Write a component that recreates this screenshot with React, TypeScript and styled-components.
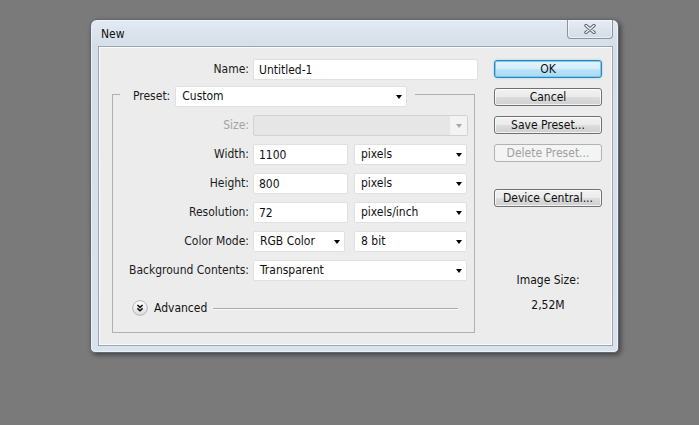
import styled, { createGlobalStyle } from "styled-components";

const GlobalStyle = createGlobalStyle`
    html, body {
        margin: 0;
        padding: 0;
        background: #7a7a7a;
    }
    body {
        font-family: "DejaVu Sans Condensed", "DejaVu Sans", Tahoma, sans-serif;
        font-stretch: condensed;
        font-size: 12px;
        line-height: 15px;
        color: #1b1b1b;
    }
`;

const Desktop = styled.div`
    width: 699px;
    height: 425px;
    box-sizing: border-box;
    padding: 19px 0 0 90px;
    overflow: hidden;
`;

const Window = styled.div`
    width: 529px;
    height: 334px;
    box-sizing: border-box;
    display: flex;
    flex-direction: column;
    padding: 0 5px 6px 7px;
    border: 1px solid #5f6872;
    border-radius: 7px 7px 5px 5px;
    background: linear-gradient(#e2e9f1, #d5dfe9 26px, #d9e3ed);
    box-shadow: inset 0 0 0 1px rgba(255, 255, 255, 0.55), 2px 2px 5px rgba(0, 0, 0, 0.45);
`;

const TitleBar = styled.div`
    height: 26px;
    display: flex;
    justify-content: space-between;
    align-items: flex-start;
`;

const Title = styled.div`
    padding: 7px 0 0 3px;
    color: #111;
`;

const CloseButton = styled.div`
    width: 46px;
    height: 19px;
    box-sizing: border-box;
    display: flex;
    justify-content: center;
    align-items: center;
    border: 1px solid #8a94a0;
    border-top: none;
    border-radius: 0 0 4px 4px;
    background: linear-gradient(#e6ecf2, #d4dce6);
    box-shadow: inset 0 0 0 1px rgba(255, 255, 255, 0.5);
`;

const DialogBody = styled.div`
    flex: 1;
    display: flex;
    padding: 12px 10px 0 13px;
    border: 1px solid #9ba6b2;
    background: #ececec;
    box-shadow: inset 1px 1px 0 #fbfbfb, inset -1px -1px 0 #fbfbfb;
`;

const FormColumn = styled.div`
    width: 366px;
    display: flex;
    flex-direction: column;
`;

const ButtonColumn = styled.div`
    width: 108px;
    margin-left: 16px;
    padding-top: 1px;
    display: flex;
    flex-direction: column;
    gap: 10px;
`;

const Row = styled.div`
    height: 21px;
    display: flex;
    align-items: center;
    gap: 4px;
`;

const Label = styled.div<{ $w: number; $disabled?: boolean }>`
    width: ${(p) => p.$w}px;
    flex: none;
    text-align: right;
    white-space: nowrap;
    color: ${(p) => (p.$disabled ? "#a3a3a3" : "#1b1b1b")};
`;

const TextInput = styled.input<{ $w: number }>`
    width: ${(p) => p.$w}px;
    height: 21px;
    box-sizing: border-box;
    margin: 0;
    padding: 0 0 0 5px;
    border: 1px solid #e0e0e0;
    border-radius: 2px;
    background: #fff;
    font: inherit;
    color: #111;
    outline: none;
`;

const Combo = styled.div<{ $w: number }>`
    width: ${(p) => p.$w}px;
    height: 21px;
    box-sizing: border-box;
    display: flex;
    align-items: center;
    justify-content: space-between;
    padding: 0 4px 0 6px;
    border: 1px solid #e0e0e0;
    border-radius: 2px;
    background: #fff;
    color: #111;
    white-space: nowrap;
`;

const DisabledCombo = styled.div<{ $w: number }>`
    width: ${(p) => p.$w}px;
    height: 21px;
    box-sizing: border-box;
    display: flex;
    justify-content: flex-end;
    border: 1px solid #d2d2d2;
    border-radius: 2px;
    background: #e6e6e6;
`;

const DisabledArrowBox = styled.div`
    width: 17px;
    display: flex;
    align-items: center;
    justify-content: center;
    background: #f3f3f3;
`;

const Arrow = styled.span<{ $color?: string }>`
    width: 0;
    height: 0;
    margin-top: 1px;
    border-left: 3.5px solid transparent;
    border-right: 3.5px solid transparent;
    border-top: 4px solid ${(p) => p.$color || "#000"};
`;

const Pair = styled.div`
    display: grid;
    grid-template-columns: 101px 113px;
    align-items: center;
`;

const GroupBox = styled.fieldset`
    width: 363px;
    box-sizing: border-box;
    min-width: 0;
    margin: 2px 0 0;
    padding: 8px 0 16px;
    border: 1px solid #b0b0b0;
    display: flex;
    flex-direction: column;
    gap: 8px;
`;

const Legend = styled.legend`
    margin-left: 7px;
    padding: 4px 8px 0 13px;
    display: flex;
    align-items: center;
    gap: 5px;
`;

const AdvancedRow = styled.div`
    height: 16px;
    margin-top: 11px;
    padding: 0 16px 0 19px;
    display: flex;
    align-items: center;
`;

const AdvancedText = styled.span`
    margin-left: 6px;
    color: #111;
`;

const Rule = styled.div`
    flex: 1;
    height: 1px;
    margin-left: 6px;
    background: #a9a9a9;
    box-shadow: 0 1px 0 #fafafa;
`;

const Button = styled.button<{ $primary?: boolean }>`
    width: 108px;
    height: 18px;
    box-sizing: border-box;
    margin: 0;
    padding: 0;
    font: inherit;
    line-height: 14px;
    color: #111;
    border: 1px solid ${(p) => (p.$primary ? "#3c7fb1" : "#707070")};
    border-radius: 3px;
    background: ${(p) =>
        p.$primary
            ? "linear-gradient(#e5f4fc 0%, #d4edfb 50%, #bde4f9 50%, #a9d9f4 100%)"
            : "linear-gradient(#f2f2f2 0%, #ebebeb 50%, #dddddd 50%, #cfcfcf 100%)"};
    box-shadow: ${(p) =>
        p.$primary
            ? "inset 0 0 0 1px #68d1f7, 0 0 2px rgba(60, 160, 230, 0.5)"
            : "inset 0 0 0 1px rgba(255, 255, 255, 0.75)"};

    &:disabled {
        color: #a0a0a0;
        border-color: #adb2b5;
        background: #f4f4f4;
        box-shadow: none;
    }
`;

const SpacedButton = styled(Button)`
    margin-top: 17px;
`;

const SizeInfo = styled.div<{ $first?: boolean }>`
    margin-top: ${(p) => (p.$first ? "56px" : "0")};
    text-align: center;
    color: #111;
`;

function ComboBox({ w, value }: { w: number; value: string }) {
    return (
        <Combo $w={w}>
            <span>{value}</span>
            <Arrow />
        </Combo>
    );
}

function NewDocumentDialog() {
    return (
        <Window>
            <TitleBar>
                <Title>New</Title>
                <CloseButton>
                    <svg width="12" height="10" viewBox="0 0 12 10">
                        <path d="M2 1.5 L10 8.5 M10 1.5 L2 8.5" stroke="#58616c" strokeWidth="3.4" strokeLinecap="round" />
                        <path d="M2 1.5 L10 8.5 M10 1.5 L2 8.5" stroke="#f5f7f9" strokeWidth="1.5" strokeLinecap="round" />
                    </svg>
                </CloseButton>
            </TitleBar>
            <DialogBody>
                <FormColumn>
                    <Row>
                        <Label $w={137}>Name:</Label>
                        <TextInput $w={225} defaultValue="Untitled-1" />
                    </Row>
                    <GroupBox>
                        <Legend>
                            <span>Preset:</span>
                            <ComboBox w={232} value="Custom" />
                        </Legend>
                        <Row>
                            <Label $w={136} $disabled>Size:</Label>
                            <DisabledCombo $w={215}>
                                <DisabledArrowBox>
                                    <Arrow $color="#a8a8a8" />
                                </DisabledArrowBox>
                            </DisabledCombo>
                        </Row>
                        <Row>
                            <Label $w={136}>Width:</Label>
                            <Pair>
                                <TextInput $w={95} defaultValue="1100" />
                                <ComboBox w={113} value="pixels" />
                            </Pair>
                        </Row>
                        <Row>
                            <Label $w={136}>Height:</Label>
                            <Pair>
                                <TextInput $w={95} defaultValue="800" />
                                <ComboBox w={113} value="pixels" />
                            </Pair>
                        </Row>
                        <Row>
                            <Label $w={136}>Resolution:</Label>
                            <Pair>
                                <TextInput $w={95} defaultValue="72" />
                                <ComboBox w={113} value="pixels/inch" />
                            </Pair>
                        </Row>
                        <Row>
                            <Label $w={136}>Color Mode:</Label>
                            <Pair>
                                <ComboBox w={92} value="RGB Color" />
                                <ComboBox w={113} value="8 bit" />
                            </Pair>
                        </Row>
                        <Row>
                            <Label $w={136}>Background Contents:</Label>
                            <ComboBox w={214} value="Transparent" />
                        </Row>
                        <AdvancedRow>
                            <svg width="16" height="16" viewBox="0 0 16 16">
                                <defs>
                                    <linearGradient id="adv" x1="0" y1="0" x2="0" y2="1">
                                        <stop offset="0" stopColor="#ffffff" />
                                        <stop offset="1" stopColor="#dcdcdc" />
                                    </linearGradient>
                                </defs>
                                <circle cx="8" cy="8" r="7.3" fill="url(#adv)" stroke="#b4b4b4" />
                                <path d="M5.4 5 L8 7.4 L10.6 5 M5.4 8.4 L8 10.8 L10.6 8.4" fill="none" stroke="#111" strokeWidth="1.5" />
                            </svg>
                            <AdvancedText>Advanced</AdvancedText>
                            <Rule />
                        </AdvancedRow>
                    </GroupBox>
                </FormColumn>
                <ButtonColumn>
                    <Button $primary>OK</Button>
                    <Button>Cancel</Button>
                    <Button>Save Preset...</Button>
                    <Button disabled>Delete Preset...</Button>
                    <SpacedButton>Device Central...</SpacedButton>
                    <SizeInfo $first>Image Size:</SizeInfo>
                    <SizeInfo>2,52M</SizeInfo>
                </ButtonColumn>
            </DialogBody>
        </Window>
    );
}

export default function App() {
    return (
        <>
            <GlobalStyle />
            <Desktop>
                <NewDocumentDialog />
            </Desktop>
        </>
    );
}
